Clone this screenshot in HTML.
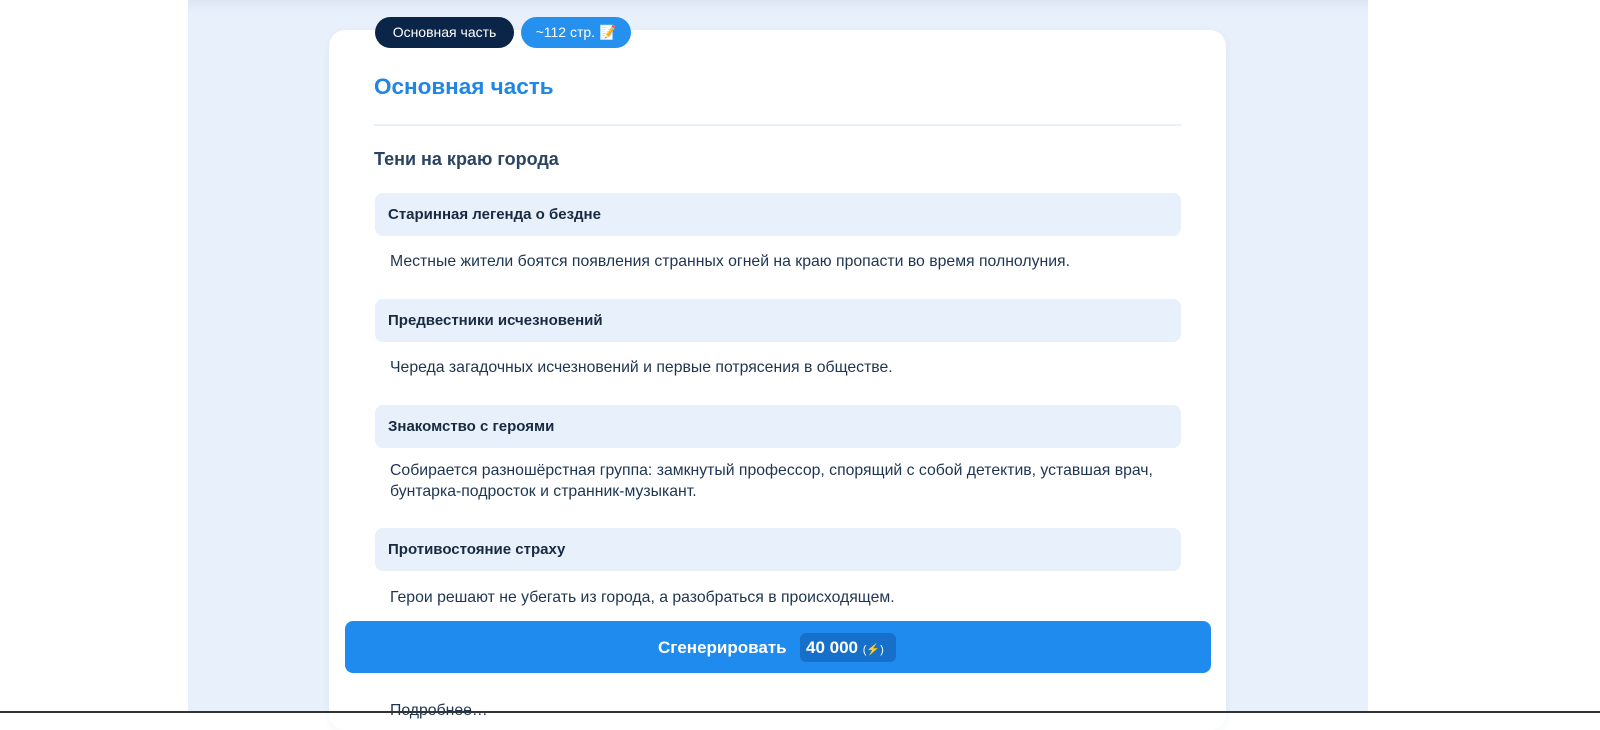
<!DOCTYPE html>
<html><head><meta charset="utf-8"><style>
*{margin:0;padding:0;box-sizing:border-box}
body{width:1600px;height:713px;overflow:hidden;background:#fff;font-family:"Liberation Sans","Noto Sans CJK SC",sans-serif;position:relative}
.mid{position:absolute;left:188px;top:0;width:1180px;height:713px;background:#e8f0fb}
.topsh{position:absolute;left:188px;top:0;width:1180px;height:14px;background:linear-gradient(#dde6f2,#e8f0fb)}
.card{position:absolute;left:329px;top:30px;width:897px;height:700px;background:#fff;border-radius:16px;box-shadow:0 2px 8px rgba(40,80,140,.06)}
.pill{position:absolute;top:17px;height:31px;border-radius:16px;color:#fff;font-size:14px;line-height:31px;text-align:center}
.a{position:absolute;white-space:nowrap}
.h{left:375px;width:806px;height:43px;background:#e8f0fb;border-radius:8px;font-weight:bold;font-size:15px;color:#182a40;line-height:43px;padding-left:13px}
.d{left:390px;font-size:15.8px;color:#1e3552;line-height:21px}
</style></head><body>
<div class="mid"></div><div class="topsh"></div>
<div class="card"></div>
<div class="pill" style="left:375px;width:139px;background:#0a2548">Основная часть</div>
<div class="pill" style="left:521px;width:110px;background:#2590ee">~112 стр. 📝</div>
<div class="a" style="left:374px;top:74px;font-size:22.5px;font-weight:bold;color:#1f86e5">Основная часть</div>
<div class="a" style="left:374px;top:124px;width:807px;height:2px;background:#e8f0fb"></div>
<div class="a" style="left:374px;top:149px;font-size:18px;font-weight:bold;color:#2a4462">Тени на краю города</div>
<div class="a h" style="top:193px">Старинная легенда о бездне</div>
<div class="a d" style="top:251px">Местные жители боятся появления странных огней на краю пропасти во время полнолуния.</div>
<div class="a h" style="top:299px">Предвестники исчезновений</div>
<div class="a d" style="top:357px">Череда загадочных исчезновений и первые потрясения в обществе.</div>
<div class="a h" style="top:405px">Знакомство с героями</div>
<div class="a d" style="top:460px">Собирается разношёрстная группа: замкнутый профессор, спорящий с собой детектив, уставшая врач,<br>бунтарка-подросток и странник-музыкант.</div>
<div class="a h" style="top:528px">Противостояние страху</div>
<div class="a d" style="top:587px">Герои решают не убегать из города, а разобраться в происходящем.</div>
<div class="a" style="left:345px;top:621px;width:866px;height:52px;background:#208bee;border-radius:8px"></div>
<div class="a" style="left:658px;top:638px;font-size:17px;font-weight:bold;color:#fff">Сгенерировать</div>
<div class="a" style="left:800px;top:633px;width:96px;height:29px;background:#1670c9;border-radius:6px;color:#fff;font-size:17px;font-weight:bold;line-height:29px;padding-left:6px">40 000 <span style="font-size:11px;font-weight:normal">(⚡)</span></div>
<div class="a d" style="top:700px">Подробнее…</div>
<div class="a" style="left:0;top:711px;width:1600px;height:2px;background:#333"></div>
</body></html>
